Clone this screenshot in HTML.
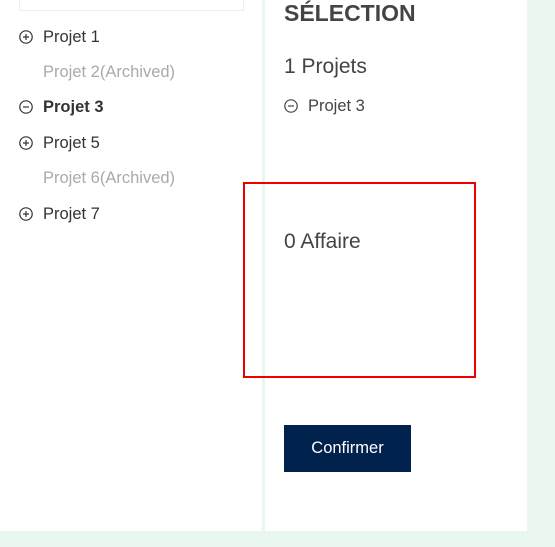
<!DOCTYPE html>
<html><head><style>
body{margin:0;width:555px;height:547px;background:#eaf6f0;font-family:"Liberation Sans",sans-serif;position:relative;overflow:hidden}
.panel{position:absolute;left:0;top:0;width:527px;height:531px;background:#fff}
.div{position:absolute;left:262px;top:0;width:3px;height:531px;background:#eaf6f0}
.box{position:absolute;left:19px;top:-2px;width:223px;height:12px;border:1px solid #e4f3ee;border-top:none}
.it{position:absolute;left:43px;font-size:16.5px;color:#333;line-height:20px}
.ic{position:absolute;left:-24px;top:3px;width:14px;height:14px}
.arc{color:#aaa}
.red{position:absolute;left:243px;top:182px;width:229px;height:192px;border:2px solid #e00}
.btn{position:absolute;left:284px;top:425px;width:127px;height:47px;background:#00224d;color:#fff;font-size:16.5px;text-align:center;line-height:47px}
</style></head><body>
<div class="panel"></div><div class="div"></div><div class="box"></div>
<div class="it" style="top:27px"><svg class="ic" viewBox="0 0 14 14"><circle cx="7" cy="7" r="6.2" fill="none" stroke="#333" stroke-width="1.2"/><path d="M4 7h6M7 4v6" stroke="#333" stroke-width="1.2"/></svg>Projet 1</div>
<div class="it arc" style="top:62px">Projet 2(Archived)</div>
<div class="it" style="top:97px;font-weight:bold"><svg class="ic" viewBox="0 0 14 14"><circle cx="7" cy="7" r="6.2" fill="none" stroke="#333" stroke-width="1.2"/><path d="M4 7h6" stroke="#333" stroke-width="1.2"/></svg>Projet 3</div>
<div class="it" style="top:133px"><svg class="ic" viewBox="0 0 14 14"><circle cx="7" cy="7" r="6.2" fill="none" stroke="#333" stroke-width="1.2"/><path d="M4 7h6M7 4v6" stroke="#333" stroke-width="1.2"/></svg>Projet 5</div>
<div class="it arc" style="top:168px">Projet 6(Archived)</div>
<div class="it" style="top:204px"><svg class="ic" viewBox="0 0 14 14"><circle cx="7" cy="7" r="6.2" fill="none" stroke="#333" stroke-width="1.2"/><path d="M4 7h6M7 4v6" stroke="#333" stroke-width="1.2"/></svg>Projet 7</div>
<div style="position:absolute;left:284px;top:0px;font-size:23px;font-weight:bold;color:#444">SÉLECTION</div>
<div style="position:absolute;left:284px;top:55px;font-size:21px;color:#444">1 Projets</div>
<div class="it" style="left:308px;top:96px;color:#444"><svg class="ic" viewBox="0 0 14 14"><circle cx="7" cy="7" r="6.2" fill="none" stroke="#444" stroke-width="1.2"/><path d="M4 7h6" stroke="#444" stroke-width="1.2"/></svg>Projet 3</div>
<div style="position:absolute;left:284px;top:230px;font-size:21px;color:#444">0 Affaire</div>
<div class="red"></div>
<div class="btn">Confirmer</div>
</body></html>
